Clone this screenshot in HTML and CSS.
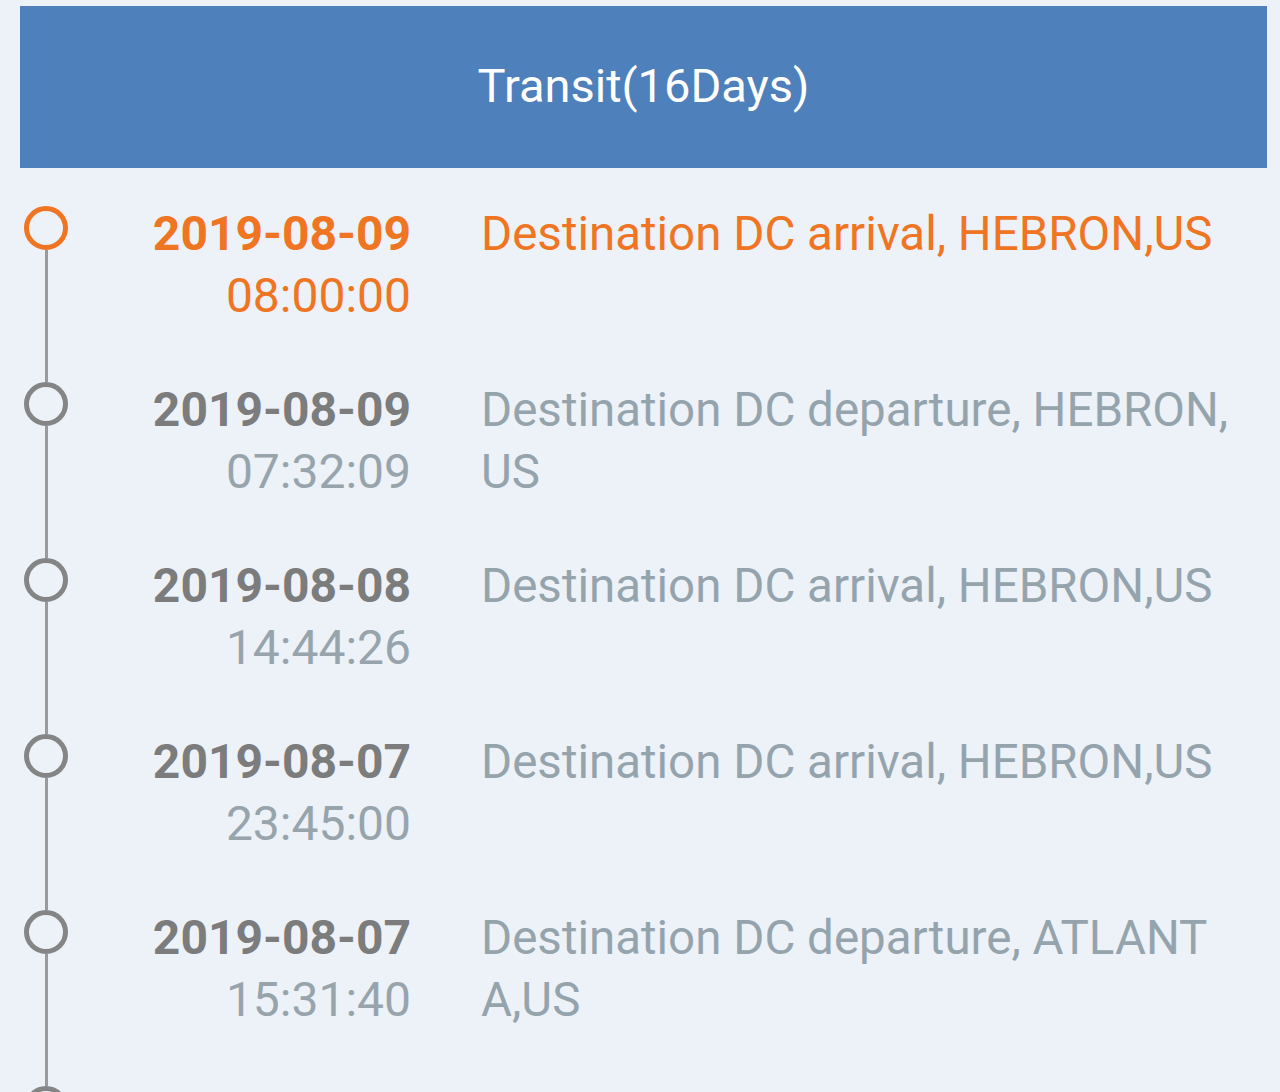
FILE: index.html
```html
<!DOCTYPE html>
<html>
<head>
<meta charset="utf-8">
<link rel="stylesheet" href="styles.css">
</head>
<body>
<div class="header">Transit(16Days)</div>
<div class="list">
  <div class="row active">
    <div class="track"><div class="dot"></div><div class="line"></div></div>
    <div class="when"><div class="date">2019-08-09</div><div class="time">08:00:00</div></div>
    <div class="desc">Destination DC arrival, HEBRON,US</div>
  </div>
  <div class="row">
    <div class="track"><div class="dot"></div><div class="line"></div></div>
    <div class="when"><div class="date">2019-08-09</div><div class="time">07:32:09</div></div>
    <div class="desc">Destination DC departure, HEBRON,US</div>
  </div>
  <div class="row">
    <div class="track"><div class="dot"></div><div class="line"></div></div>
    <div class="when"><div class="date">2019-08-08</div><div class="time">14:44:26</div></div>
    <div class="desc">Destination DC arrival, HEBRON,US</div>
  </div>
  <div class="row">
    <div class="track"><div class="dot"></div><div class="line"></div></div>
    <div class="when"><div class="date">2019-08-07</div><div class="time">23:45:00</div></div>
    <div class="desc">Destination DC arrival, HEBRON,US</div>
  </div>
  <div class="row">
    <div class="track"><div class="dot"></div><div class="line"></div></div>
    <div class="when"><div class="date">2019-08-07</div><div class="time">15:31:40</div></div>
    <div class="desc">Destination DC departure, ATLANTA,US</div>
  </div>
  <div class="row">
    <div class="track"><div class="dot"></div><div class="line"></div></div>
  </div>
</div>
</body>
</html>
```
FILE: styles.css
```css
html, body {
  margin: 0;
  padding: 0;
  background: #edf2f9;
  font-family: Roboto, "Noto Sans", sans-serif;
  overflow: hidden;
}
.header {
  margin: 6px 13px 0 20px;
  height: 162px;
  padding-bottom: 4px;
  box-sizing: border-box;
  background: #4e80bb;
  color: #ffffff;
  font-size: 47px;
  display: flex;
  align-items: center;
  justify-content: center;
}
.list {
  padding: 38px 0 0 24px;
}
.row {
  display: grid;
  grid-template-columns: 44px 343px 822px;
  min-height: 176px;
}
.track {
  display: flex;
  flex-direction: column;
  align-items: center;
}
.dot {
  width: 34px;
  height: 34px;
  border: 5px solid #858585;
  border-radius: 50%;
  flex: none;
}
.line {
  width: 3px;
  flex: 1;
  background: #9a9a9a;
}
.when {
  text-align: right;
  font-size: 48px;
  line-height: 62px;
  margin-top: -3px;
}
.date {
  font-weight: bold;
  color: #7c7c7c;
}
.time {
  color: #97a4ab;
}
.desc {
  padding-left: 70px;
  font-size: 47.5px;
  line-height: 62px;
  margin-top: -3px;
  color: #95a4ac;
  word-break: break-all;
}
.active .dot { border-color: #f07522; }
.active .date, .active .time, .active .desc { color: #f07522; }
```
